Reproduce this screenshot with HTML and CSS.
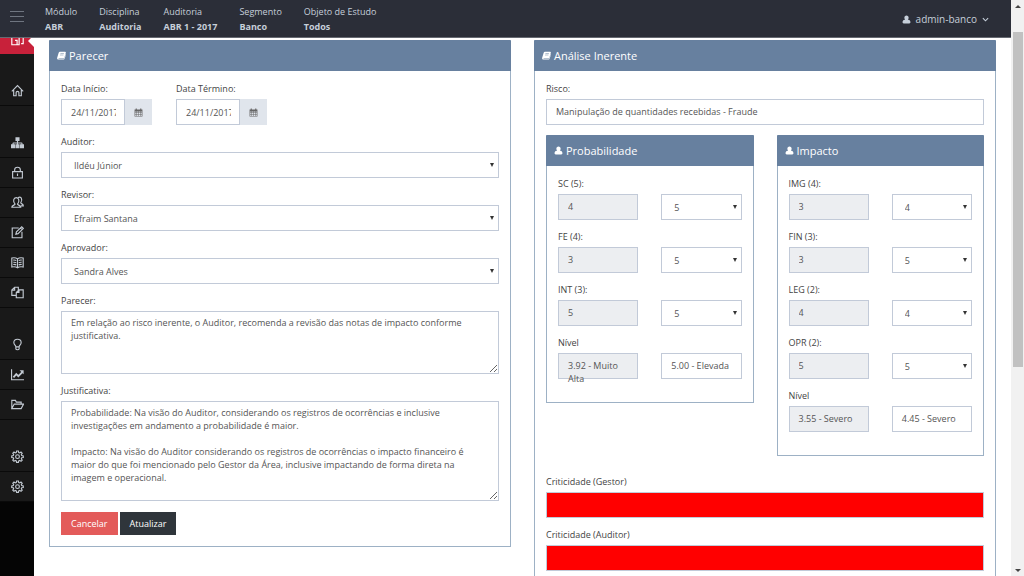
FILE: index.html
```html
<!DOCTYPE html>
<html lang="pt-BR">
<head>
<meta charset="utf-8">
<title>Auditoria - Parecer</title>
<link rel="stylesheet" href="styles.css">
</head>
<body>
<svg class="sprite" aria-hidden="true">
  <symbol id="book" viewBox="0 0 16 16"><path fill="currentColor" d="M5.2 1.5h9.3c1 0 1.5.7 1.2 1.6l-2.5 8.3c-.2.8-.8 1.1-1.6 1.1H3.2c-.6 0-.8.8 0 1h8.9c.6 0 1-.3 1.2-.9l2.2-7.2c.5.4.5.8.3 1.4l-2.2 7c-.3.8-.9 1.2-1.7 1.2H2.600C.9 15-.2 13.400.3 12L3 3.300C3.400 2.100 4.100 1.500 5.200 1.500zM6.200 4.300l-.3.9h6.200l.3-.9zM5.500 6.700l-.3.9h6.200l.3-.9z"/></symbol>
  <symbol id="user" viewBox="0 0 16 16"><path fill="currentColor" d="M8 1c2.200 0 3.800 1.700 3.800 4 0 1.300-.5 2.500-1.300 3.300C13.600 8 15 10 15 13c0 1.300-.8 2-2 2H3c-1.200 0-2-.7-2-2 0-3 1.400-5 4.500-4.700C4.700 7.500 4.200 6.300 4.200 5c0-2.300 1.600-4 3.800-4z"/></symbol>
  <symbol id="calendar" viewBox="0 0 16 16"><path fill="currentColor" fill-rule="evenodd" d="M3 1h2v1.500h6V1h2v1.500h2V15H1V2.500h2zM2.200 6v2h2.300V6zm3.200 0v2h2.200V6zm3.100 0v2h2.200V6zm3.100 0v2h2.200V6zM2.200 9v2h2.300V9zm3.200 0v2h2.200V9zm3.100 0v2h2.200V9zm3.100 0v2h2.200V9zM2.200 12v2h2.300v-2zm3.200 0v2h2.200v-2zm3.100 0v2h2.200v-2zm3.100 0v2h2.200v-2z"/></symbol>
  <symbol id="home" viewBox="0 0 16 16"><path class="line" d="M1 9 8 2l7 7M3.300 7.500v7h3V10.500c0-2 3.400-2 3.400 0v4h3v-7"/></symbol>
  <symbol id="sitemap" viewBox="0 0 16 16"><path fill="currentColor" d="M5.500 1.500h5v4.500H8.700v2H13c.8 0 1.200.5 1.200 1.200V10H16v5h-5v-5h1.800v-.7H8.700v.7h1.800v5h-5v-5h1.800v-.7H3.200v.7H5v5H0v-5h1.800v-.8C1.800 8.500 2.200 8 3 8h4.300V6H5.500z"/></symbol>
  <symbol id="lock" viewBox="0 0 16 16"><path class="line" d="M2 7h12v7.800H2zM4.500 7V4.500C4.500.5 11.500.5 11.500 4.500V7M8 9.300v3"/></symbol>
  <symbol id="users" viewBox="0 0 16 16"><path class="line" d="M1 13.800c0-2.300 3-2 4-3.800-3-3.500-2-8 1.500-8s4.300 4.500 1.500 8c1 1.800 4 1.500 4 3.800zM8.500 2.300C12-.7 15 4 12 8.500c.5 1.500 3.200 1 3.200 3.700h-3"/></symbol>
  <symbol id="edit" viewBox="0 0 16 16"><path class="line" d="M9.500 2.500H1.500v12h12V7M6 10l.7-2.800 6.500-6.200 2 2-6.500 6.400zM11.700 2.500l2 2"/></symbol>
  <symbol id="open-book" viewBox="0 0 16 16"><path class="line" d="M8 3.500C6 2 3.500 2 1 2.500v11c2.500-.5 5-.5 7 1 2-1.500 4.500-1.500 7-1v-11c-2.500-.5-5-.5-7 1zv11M2.800 5c1.500-.2 2.500 0 3.700.5M2.800 7.700c1.500-.2 2.500 0 3.700.5M2.800 10.400c1.500-.2 2.500 0 3.700.5M13.200 5c-1.500-.2-2.500 0-3.700.5M13.200 7.700c-1.500-.2-2.500 0-3.700.5M13.200 10.400c-1.500-.2-2.500 0-3.700.5"/></symbol>
  <symbol id="copy" viewBox="0 0 16 16"><path class="line" d="M6 11.500H1V5l3.500-3.500H9V5M4.500 1.500V5H1M9.800 4.800H15v9.700H6.500V8zM9.800 4.800V8H6.500"/></symbol>
  <symbol id="pages" viewBox="0 0 16 16"><path class="line" d="M1 2v12.500h9V2zM5 9h2.500v5M12.500 2H15v11h-2.500"/></symbol>
  <symbol id="bulb" viewBox="0 0 16 16"><path class="line" d="M6 11c0-2-2.500-2.500-2.500-5.500C3.500 2.800 5.500 1.500 8 1.500s4.500 1.300 4.500 4C12.500 8.500 10 9 10 11zM6 11v2.500c.5 1.300 3.500 1.300 4 0V11"/></symbol>
  <symbol id="chart" viewBox="0 0 16 16"><path fill="none" stroke="currentColor" stroke-width="1.400" d="M.7 1.500v13H16"/><path fill="none" stroke="currentColor" stroke-width="2.200" d="M3 11.500l3.500-4 2.500 2.500 5-5"/><path fill="currentColor" d="M10.500 2.700h5v5z"/></symbol>
  <symbol id="folder" viewBox="0 0 16 16"><path class="line" d="M1 13V3h4.500l1 2h6v2.500M1 13l3-5.500h11.500L12.500 13z"/></symbol>
  <symbol id="gear" viewBox="0 0 16 16"><path class="line" d="M6.900 1.200h2.200l.4 1.900 1.200.5 1.600-1.100 1.500 1.500-1.100 1.600.5 1.200 1.900.4v2l-1.900.4-.5 1.200 1.100 1.600-1.500 1.500-1.600-1.100-1.200.5-.4 1.900H6.900l-.4-1.900-1.200-.5-1.600 1.100-1.500-1.500 1.100-1.600-.5-1.200L.9 9.200v-2l1.900-.4.5-1.200L2.200 4l1.500-1.500 1.600 1.100 1.200-.5z"/><circle class="line" cx="8" cy="8.200" r="2.300"/></symbol>
  <symbol id="chevron" viewBox="0 0 16 16"><path fill="none" stroke="currentColor" stroke-width="2.500" d="M2 5l6 6 6-6"/></symbol>
</svg>
<div class="app">
  <div class="page">
    <header class="topbar">
      <button class="menu" type="button" aria-label="Menu"><span></span><span></span><span></span></button>
      <dl class="context">
        <div><dt>Módulo</dt><dd>ABR</dd></div>
        <div><dt>Disciplina</dt><dd>Auditoria</dd></div>
        <div><dt>Auditoria</dt><dd>ABR 1 - 2017</dd></div>
        <div><dt>Segmento</dt><dd>Banco</dd></div>
        <div><dt>Objeto de Estudo</dt><dd>Todos</dd></div>
      </dl>
      <button class="account" type="button"><svg class="icon-sm"><use href="#user"/></svg>admin-banco<svg class="icon-xs"><use href="#chevron"/></svg></button>
    </header>
    <div class="columns">
      <nav class="sidebar">
        <ul>
          <li class="active"><a href="#" aria-label="Avaliação"><svg><use href="#pages"/></svg></a></li>
        </ul>
        <ul>
          <li><a href="#" aria-label="Início"><svg><use href="#home"/></svg></a></li>
        </ul>
        <ul>
          <li><a href="#" aria-label="Estrutura"><svg><use href="#sitemap"/></svg></a></li>
          <li><a href="#" aria-label="Acesso"><svg><use href="#lock"/></svg></a></li>
          <li><a href="#" aria-label="Usuários"><svg><use href="#users"/></svg></a></li>
          <li><a href="#" aria-label="Editar"><svg><use href="#edit"/></svg></a></li>
          <li><a href="#" aria-label="Biblioteca"><svg><use href="#open-book"/></svg></a></li>
          <li><a href="#" aria-label="Documentos"><svg><use href="#copy"/></svg></a></li>
        </ul>
        <ul>
          <li><a href="#" aria-label="Ideias"><svg><use href="#bulb"/></svg></a></li>
          <li><a href="#" aria-label="Relatórios"><svg><use href="#chart"/></svg></a></li>
          <li><a href="#" aria-label="Arquivos"><svg><use href="#folder"/></svg></a></li>
        </ul>
        <ul>
          <li><a href="#" aria-label="Configurações"><svg><use href="#gear"/></svg></a></li>
          <li><a href="#" aria-label="Parâmetros"><svg><use href="#gear"/></svg></a></li>
        </ul>
      </nav>
      <main class="content">
        <section class="panel">
          <h2><svg class="icon-sm"><use href="#book"/></svg>Parecer</h2>
          <form class="body">
            <div class="dates">
              <div class="field"><label for="inicio">Data Início:</label>
                <div class="date"><input id="inicio" type="text" value="24/11/2017"><button type="button" aria-label="Abrir calendário"><svg class="icon-sm"><use href="#calendar"/></svg></button></div></div>
              <div class="field"><label for="termino">Data Término:</label>
                <div class="date"><input id="termino" type="text" value="24/11/2017"><button type="button" aria-label="Abrir calendário"><svg class="icon-sm"><use href="#calendar"/></svg></button></div></div>
            </div>
            <div class="field"><label for="auditor">Auditor:</label><div class="select"><select id="auditor"><option>Ildéu Júnior</option></select></div></div>
            <div class="field"><label for="revisor">Revisor:</label><div class="select"><select id="revisor"><option>Efraim Santana</option></select></div></div>
            <div class="field"><label for="aprovador">Aprovador:</label><div class="select"><select id="aprovador"><option>Sandra Alves</option></select></div></div>
            <div class="field"><label for="parecer">Parecer:</label><textarea id="parecer" class="short">Em relação ao risco inerente, o Auditor, recomenda a revisão das notas de impacto conforme justificativa.</textarea></div>
            <div class="field"><label for="justificativa">Justificativa:</label><textarea id="justificativa" class="tall">Probabilidade: Na visão do Auditor, considerando os registros de ocorrências e inclusive investigações em andamento a probabilidade é maior.

Impacto: Na visão do Auditor considerando os registros de ocorrências o impacto financeiro é maior do que foi mencionado pelo Gestor da Área, inclusive impactando de forma direta na imagem e operacional.</textarea></div>
            <div class="actions"><button class="cancel" type="button">Cancelar</button><button class="update" type="button">Atualizar</button></div>
          </form>
        </section>
        <section class="panel analysis">
          <h2><svg class="icon-sm"><use href="#book"/></svg>Análise Inerente</h2>
          <form class="body">
            <div class="field"><label for="risco">Risco:</label><input id="risco" class="control" type="text" readonly value="Manipulação de quantidades recebidas - Fraude"></div>
            <div class="pair">
              <section class="panel">
                <h2><svg class="icon-sm"><use href="#user"/></svg>Probabilidade</h2>
                <div class="body">
                  <div class="field"><label for="sc">SC (5):</label><div class="row"><input class="control off" type="text" readonly value="4" aria-label="SC gestor"><div class="select"><select id="sc"><option>5</option></select></div></div></div>
                  <div class="field"><label for="fe">FE (4):</label><div class="row"><input class="control off" type="text" readonly value="3" aria-label="FE gestor"><div class="select"><select id="fe"><option>5</option></select></div></div></div>
                  <div class="field"><label for="int">INT (3):</label><div class="row"><input class="control off" type="text" readonly value="5" aria-label="INT gestor"><div class="select"><select id="int"><option>5</option></select></div></div></div>
                  <div class="field"><label for="nivel-p">Nível</label><div class="row"><output class="control off">3.92 - Muito Alta</output><output id="nivel-p" class="control">5.00 - Elevada</output></div></div>
                </div>
              </section>
              <section class="panel">
                <h2><svg class="icon-sm"><use href="#user"/></svg>Impacto</h2>
                <div class="body">
                  <div class="field"><label for="img">IMG (4):</label><div class="row"><input class="control off" type="text" readonly value="3" aria-label="IMG gestor"><div class="select"><select id="img"><option>4</option></select></div></div></div>
                  <div class="field"><label for="fin">FIN (3):</label><div class="row"><input class="control off" type="text" readonly value="3" aria-label="FIN gestor"><div class="select"><select id="fin"><option>5</option></select></div></div></div>
                  <div class="field"><label for="leg">LEG (2):</label><div class="row"><input class="control off" type="text" readonly value="4" aria-label="LEG gestor"><div class="select"><select id="leg"><option>4</option></select></div></div></div>
                  <div class="field"><label for="opr">OPR (2):</label><div class="row"><input class="control off" type="text" readonly value="5" aria-label="OPR gestor"><div class="select"><select id="opr"><option>5</option></select></div></div></div>
                  <div class="field"><label for="nivel-i">Nível</label><div class="row"><output class="control off">3.55 - Severo</output><output id="nivel-i" class="control">4.45 - Severo</output></div></div>
                </div>
              </section>
            </div>
            <div class="field"><label for="crit-g">Criticidade (Gestor)</label><output id="crit-g" class="control critical"></output></div>
            <div class="field"><label for="crit-a">Criticidade (Auditor)</label><output id="crit-a" class="control critical"></output></div>
          </form>
        </section>
      </main>
    </div>
  </div>
  <div class="scrollbar" aria-hidden="true"><span class="up"></span><span class="thumb"></span><span class="down"></span></div>
</div>
</body>
</html>
```

FILE: styles.css
```css
* { box-sizing: border-box; }
body { margin: 0; background: #fff; color: #444; font: 9px/13px "Open Sans", "Noto Sans", sans-serif; }
button, input, select, textarea { font: inherit; color: inherit; border-radius: 0; margin: 0; }
button { border: 0; padding: 0; cursor: pointer; }
h2, dl, dd, ul { margin: 0; padding: 0; }
.sprite { position: absolute; width: 0; height: 0; }
.line { fill: none; stroke: currentColor; stroke-width: 1.4; }
.icon-sm { width: 9px; height: 9px; }
.icon-xs { width: 7px; height: 7px; }

.app { display: flex; height: 100vh; overflow: hidden; }
.page { flex: 1; min-width: 0; display: flex; flex-direction: column; }

.topbar { flex: none; display: flex; align-items: center; height: 38px; padding: 0 22px 0 10px; background: #2b2e38; border-bottom: 1px solid #666a72; color: #c6cfda; }
.menu { display: grid; gap: 4px; width: 14px; margin: 0 21px 4px 0; background: none; }
.menu span { height: 1px; background: #6f7580; }
.context { display: flex; gap: 22px; line-height: 15px; }
.context dd { font-weight: 700; }
.account { display: flex; align-items: center; gap: 5px; margin-left: auto; padding-top: 2px; background: none; font-size: 10px; }

.columns { flex: 1; min-height: 0; display: flex; }
.sidebar { flex: none; width: 34px; background: #050505; overflow: hidden; }
.sidebar ul { list-style: none; background: #191919; }
.sidebar ul + ul { padding-top: 22px; }
.sidebar a { display: flex; align-items: center; justify-content: center; height: 30px; border-bottom: 1px solid #0a0a0a; color: #c3cad3; }
.sidebar svg { width: 13px; height: 13px; }
.sidebar .active { position: relative; height: 16px; overflow: hidden; display: flex; align-items: flex-end; background: #c8213a; }
.sidebar .active a { width: 100%; border: 0; color: #fff; }
.sidebar .active::after { content: ""; position: absolute; right: 0; top: -3px; border: 6px solid transparent; border-left: 0; border-right-color: #fff; }

.content { flex: 1; min-width: 0; display: grid; grid-template-columns: 1fr 1fr; align-items: start; gap: 23px; padding: 2px 15px 0; overflow: hidden; }
.panel { min-width: 0; border: 1px solid #9db1c5; border-top-color: #67809f; }
.panel h2 { display: flex; align-items: center; gap: 3px; height: 30px; margin: 0 -1px; padding: 0 8px 2px; background: #67809f; color: #fff; font-size: 11px; font-weight: 400; }
.body { padding: 11px; }
.field { display: flex; flex-direction: column; gap: 4px; margin-bottom: 10px; }
.dates { display: flex; gap: 24px; }
.date { display: flex; width: 91px; }
.date input { flex: 1; min-width: 0; height: 26px; padding: 0 8px 0 9px; border: 1px solid #c2cad8; background: #fff; color: #555; }
.date button { width: 27px; display: flex; align-items: center; justify-content: center; background: #e0e5ec; color: #666; }

.control { width: 100%; min-width: 0; height: 26px; padding: 4px 9px 6px; border: 1px solid #c2cad8; background: #fff; color: #555; }
output.control { padding-top: 5px; }
.off { background: #eceef1; }
.critical { background: #f00; }
.select { position: relative; min-width: 0; }
.select select { appearance: none; display: block; width: 100%; height: 26px; padding: 0 16px 0 12px; border: 1px solid #c2cad8; background: #fff; color: #555; }
.select::after { content: ""; position: absolute; right: 5px; top: 11px; border: 2px solid transparent; border-top: 4px solid #333; border-bottom: 0; pointer-events: none; }
textarea { display: block; width: 100%; padding: 4px 9px; border: 1px solid #c2cad8; color: #555; resize: vertical; }
.short { height: 63px; }
.tall { height: 100px; }
.actions { display: flex; gap: 2px; padding-top: 1px; }
.actions button { height: 23px; padding: 0 10px; color: #fff; }
.actions .cancel { background: #e35b5a; }
.actions .update { background: #2f353b; }

.pair { display: grid; grid-template-columns: 1fr 1fr; align-items: start; gap: 23px; margin-bottom: 19px; }
.pair .body { padding-bottom: 13px; }
.row { display: grid; grid-template-columns: 1fr 1fr; gap: 23px; }
.analysis { min-height: 100vh; }

.scrollbar { flex: none; display: flex; flex-direction: column; width: 13px; padding: 5px 1px 4px 2px; background: #f1f1f1; }
.up, .down { align-self: center; border: 3px solid transparent; }
.up { border-top: 0; border-bottom-color: #444; }
.down { margin-top: auto; border-bottom: 0; border-top-color: #444; }
.thumb { height: 59%; margin-top: 24px; background: #c1c1c1; }
```
